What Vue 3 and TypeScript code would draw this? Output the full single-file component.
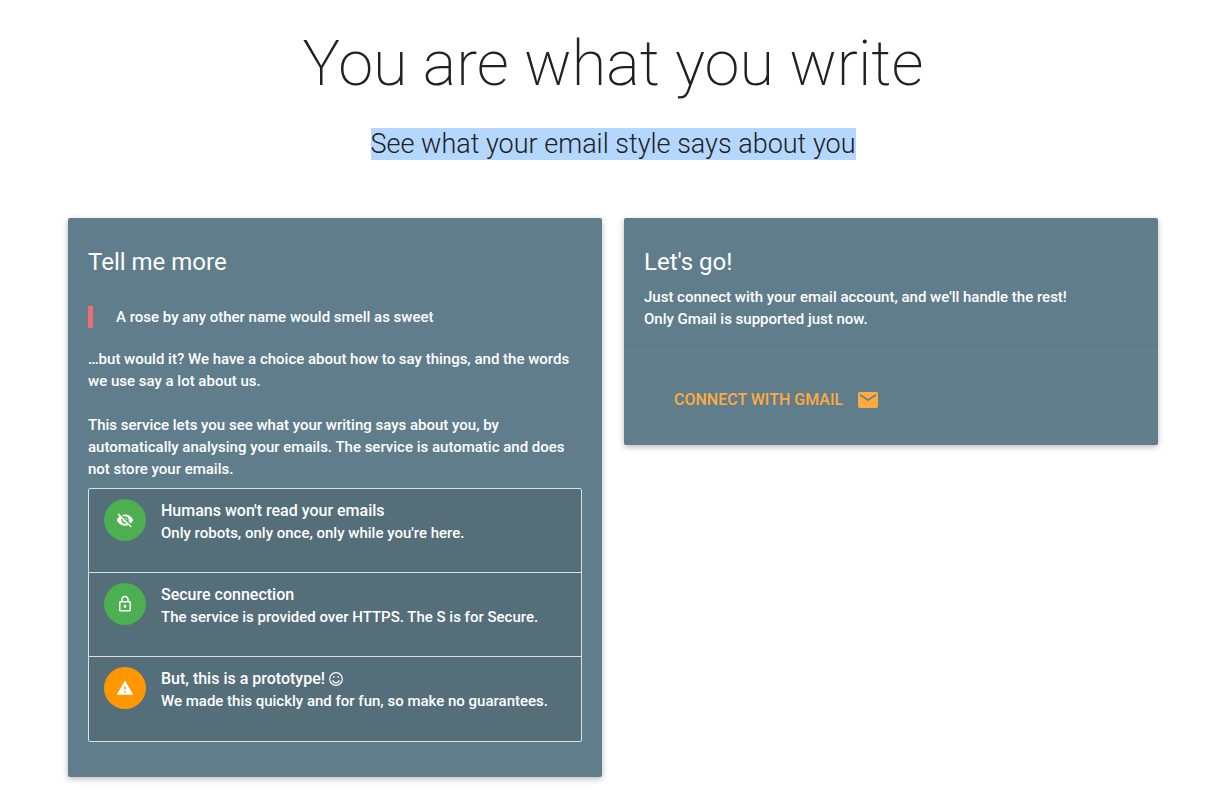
<script setup lang="ts">
interface Assurance {
  title: string
  detail: string
  icon: 'hidden' | 'lock' | 'warning'
  smile?: boolean
}

const assurances: Assurance[] = [
  { title: "Humans won't read your emails", detail: "Only robots, only once, only while you're here.", icon: 'hidden' },
  { title: 'Secure connection', detail: 'The service is provided over HTTPS. The S is for Secure.', icon: 'lock' },
  { title: 'But, this is a prototype!', detail: 'We made this quickly and for fun, so make no guarantees.', icon: 'warning', smile: true },
]

const iconPaths: Record<Assurance['icon'], string> = {
  hidden:
    'M12 7c2.76 0 5 2.24 5 5 0 .65-.13 1.26-.36 1.83l2.92 2.92c1.51-1.26 2.7-2.89 3.43-4.75-1.73-4.39-6-7.5-11-7.5-1.4 0-2.74.25-3.98.7l2.16 2.16C10.74 7.13 11.35 7 12 7zM2 4.27l2.28 2.28.46.46C3.08 8.3 1.78 10.02 1 12c1.73 4.39 6 7.5 11 7.5 1.55 0 3.03-.3 4.38-.84l.42.42L19.73 22 21 20.73 3.27 3 2 4.27zM7.53 9.8l1.55 1.55c-.05.21-.08.43-.08.65 0 1.66 1.34 3 3 3 .22 0 .44-.03.65-.08l1.55 1.55c-.67.33-1.41.53-2.2.53-2.76 0-5-2.24-5-5 0-.79.2-1.53.53-2.2zm4.31-.78l3.15 3.15.02-.16c0-1.66-1.34-3-3-3l-.17.01z',
  lock:
    'M12 17c1.1 0 2-.9 2-2s-.9-2-2-2-2 .9-2 2 .9 2 2 2zm6-9h-1V6c0-2.76-2.24-5-5-5S7 3.24 7 6v2H6c-1.1 0-2 .9-2 2v10c0 1.1.9 2 2 2h12c1.1 0 2-.9 2-2V10c0-1.1-.9-2-2-2zM8.9 6c0-1.71 1.39-3.1 3.1-3.1s3.1 1.39 3.1 3.1v2H8.9V6zM18 20H6V10h12v10z',
  warning: 'M1 21h22L12 2 1 21zm12-3h-2v-2h2v2zm0-4h-2v-4h2v4z',
}
</script>

<template>
  <main class="page">
    <header class="hero">
      <h1>You are what you write</h1>
      <p class="tagline"><span>See what your email style says about you</span></p>
    </header>

    <div class="cards">
      <section class="card">
        <div class="card-content">
          <h2>Tell me more</h2>
          <blockquote>A rose by any other name would smell as sweet</blockquote>
          <p>…but would it? We have a choice about how to say things, and the words we use say a lot about us.</p>
          <p class="spaced">
            This service lets you see what your writing says about you, by automatically analysing your emails.
            The service is automatic and does not store your emails.
          </p>
          <ul class="collection">
            <li v-for="item in assurances" :key="item.title">
              <span class="badge" :class="{ caution: item.icon === 'warning' }">
                <svg viewBox="0 0 24 24" aria-hidden="true"><path :d="iconPaths[item.icon]" /></svg>
              </span>
              <div class="item-text">
                <h3>
                  {{ item.title }}
                  <svg v-if="item.smile" class="smile" viewBox="0 0 14 14" role="img" aria-label="Smile">
                    <circle cx="7" cy="7" r="6.3" />
                    <path d="M3.6 8.3c.5 1.6 1.8 2.5 3.4 2.5s2.9-.9 3.4-2.5" />
                    <path class="eyes" d="M4 4.2h1.5v1.6H4zM8.5 4.2H10v1.6H8.5z" />
                  </svg>
                </h3>
                <p>{{ item.detail }}</p>
              </div>
            </li>
          </ul>
        </div>
      </section>

      <section class="card">
        <div class="card-content">
          <h2>Let's go!</h2>
          <p>Just connect with your email account, and we'll handle the rest!<br />Only Gmail is supported just now.</p>
        </div>
        <div class="card-action">
          <a href="#connect">
            Connect with Gmail
            <svg viewBox="0 0 24 24" aria-hidden="true">
              <path d="M20 4H4c-1.1 0-1.99.9-1.99 2L2 18c0 1.1.9 2 2 2h16c1.1 0 2-.9 2-2V6c0-1.1-.9-2-2-2zm0 4l-8 5-8-5V6l8 5 8-5v2z" />
            </svg>
          </a>
        </div>
      </section>
    </div>
  </main>
</template>

<style>
body {
  margin: 0;
  background: #fff;
}
</style>

<style scoped>
.page {
  box-sizing: border-box;
  padding: 26px 66px 32px 68px;
  font-family: Roboto, "Liberation Sans", sans-serif;
  font-size: 15px;
  font-weight: 500;
  line-height: 22px;
  color: #fff;
}

h1,
h2,
h3,
p,
ul,
blockquote {
  margin: 0;
  padding: 0;
}

.hero {
  text-align: center;
  color: #212121;
}

h1 {
  font-size: 63px;
  line-height: 76px;
  font-weight: 200;
}

.tagline {
  margin: 26px 0 58px;
  font-size: 27px;
  line-height: 32px;
  font-weight: 300;
}

.tagline span {
  display: inline-block;
  background: #b3d7ff;
}

.cards {
  display: grid;
  grid-template-columns: repeat(2, minmax(0, 1fr));
  gap: 22px;
  align-items: start;
}

.card {
  border-radius: 2px;
  background: #607d8b;
  box-shadow: 0 2px 5px rgba(0, 0, 0, 0.16), 0 2px 8px rgba(0, 0, 0, 0.12);
}

.card-content {
  padding: 20px;
}

h2 {
  font-size: 24px;
  line-height: 48px;
  font-weight: 400;
}

blockquote {
  margin: 20px 0;
  padding-left: 23px;
  border-left: 5px solid #ee6e73;
}

.spaced {
  margin-top: 22px;
}

.collection {
  margin: 8px 0 15px;
  border: 1px solid #e0e0e0;
  border-radius: 2px;
  list-style: none;
  background: #546e7a;
}

.collection li {
  display: flex;
  gap: 15px;
  box-sizing: border-box;
  min-height: 84px;
  padding: 10px 15px;
}

.collection li:not(:last-child) {
  border-bottom: 1px solid #e0e0e0;
}

.badge {
  display: flex;
  flex: none;
  align-items: center;
  justify-content: center;
  width: 42px;
  height: 42px;
  border-radius: 50%;
  background: #4caf50;
}

.badge.caution {
  background: #ff9800;
}

.badge svg {
  width: 18px;
  height: 18px;
  fill: #fff;
}

h3 {
  font-size: 16px;
  line-height: 23px;
  font-weight: 500;
}

.smile {
  width: 14px;
  height: 14px;
  vertical-align: -2px;
  fill: none;
  stroke: #fff;
  stroke-width: 1.2;
}

.smile .eyes {
  fill: #fff;
  stroke: none;
}

.card-action {
  padding: 22px 20px 18px;
  border-top: 1px solid rgba(160, 160, 160, 0.2);
}

.card-action a {
  display: inline-flex;
  align-items: center;
  gap: 13px;
  height: 54px;
  padding: 0 30px;
  font-size: 16px;
  text-transform: uppercase;
  text-decoration: none;
  color: #ffab40;
}

.card-action svg {
  width: 24px;
  height: 24px;
  fill: currentColor;
}
</style>
